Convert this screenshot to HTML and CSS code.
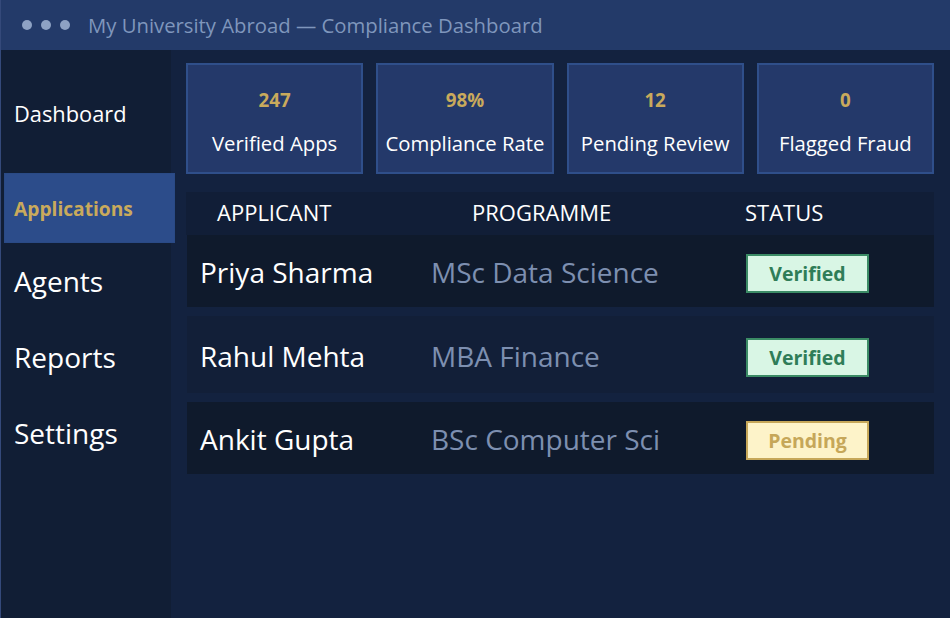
FILE: index.html
```html
<!DOCTYPE html>
<html>
<head>
  <meta charset="UTF-8">
  <meta name="viewport" content="width=device-width, initial-scale=1.0">
  <title>My University Abroad — Compliance Dashboard</title>
  <link rel="stylesheet" href="styles.css">
</head>
<body>
  <div class="window">
    <div class="titlebar">
      <span class="dot"></span><span class="dot"></span><span class="dot"></span>
      <span class="title">My University Abroad — Compliance Dashboard</span>
    </div>
    <div class="layout">
      <nav class="sidebar">
        <a class="nav-item small">Dashboard</a>
        <a class="nav-item active">Applications</a>
        <a class="nav-item">Agents</a>
        <a class="nav-item">Reports</a>
        <a class="nav-item">Settings</a>
      </nav>
      <main class="main">
        <div class="stats">
          <div class="stat-card"><div class="stat-value">247</div><div class="stat-label">Verified Apps</div></div>
          <div class="stat-card"><div class="stat-value">98%</div><div class="stat-label">Compliance Rate</div></div>
          <div class="stat-card"><div class="stat-value">12</div><div class="stat-label">Pending Review</div></div>
          <div class="stat-card"><div class="stat-value">0</div><div class="stat-label">Flagged Fraud</div></div>
        </div>
        <div class="table">
          <div class="table-head">
            <span>APPLICANT</span><span>PROGRAMME</span><span>STATUS</span>
          </div>
          <div class="table-row">
            <span class="name">Priya Sharma</span>
            <span class="programme">MSc Data Science</span>
            <span><span class="badge verified">Verified</span></span>
          </div>
          <div class="table-row alt">
            <span class="name">Rahul Mehta</span>
            <span class="programme">MBA Finance</span>
            <span><span class="badge verified">Verified</span></span>
          </div>
          <div class="table-row">
            <span class="name">Ankit Gupta</span>
            <span class="programme">BSc Computer Sci</span>
            <span><span class="badge pending">Pending</span></span>
          </div>
        </div>
      </main>
    </div>
  </div>
</body>
</html>
```

FILE: styles.css
```css
:root {
  --titlebar-bg: #233a69; --sidebar-bg: #111e35; --main-bg: #13223f;
  --card-bg: #24396a; --card-border: #2f4f8a; --gold: #c9aa5c;
  --row-bg: #0f1a2c; --row-alt: #121f38; --muted: #7d8fb0;
}
html { box-sizing: border-box; }
*, *:before, *:after { box-sizing: inherit; }
body {
  margin: 0; background: var(--main-bg); color: #ffffff;
  font-family: 'Open Sans', 'Noto Sans', Arial, sans-serif;
}
.window { width: 950px; height: 618px; display: flex; flex-direction: column; border-left: 1px solid #34497a; }
.titlebar {
  height: 50px; background: var(--titlebar-bg); display: flex; align-items: center;
  padding-left: 21px; flex-shrink: 0;
}
.dot { width: 10px; height: 10px; border-radius: 50%; background: #8ea2c4; margin-right: 9px; }
.title { margin-left: 9px; font-size: 20.3px; color: #7f96bc; }
.layout { flex: 1; display: flex; }
.sidebar { width: 170px; background: var(--sidebar-bg); display: flex; flex-direction: column; padding: 3px 0 0 3px; }
.nav-item {
  display: flex; align-items: center; height: 76px; padding-left: 10px;
  font-size: 28px; color: #ffffff;
}
.nav-item.small { height: 120px; font-size: 21.8px; }
.nav-item.active {
  height: 70px; margin-right: -4px; padding-left: 9px; background: #2c4c8a; border: 1px solid #2a4a85;
  color: var(--gold); font-weight: 700; font-size: 19.2px;
}
.main { flex: 1; padding: 13px 16px 0 15px; }
.stats { display: grid; grid-template-columns: repeat(4, 1fr); gap: 13px; }
.stat-card {
  height: 111px; background: var(--card-bg); border: 2px solid var(--card-border);
  display: flex; flex-direction: column; align-items: center; padding-top: 22px;
}
.stat-value { color: var(--gold); font-weight: 700; font-size: 18.8px; }
.stat-label { font-size: 20.3px; margin-top: 16px; }
.table { margin-top: 18px; display: flex; flex-direction: column; }
.table-head {
  height: 43px; background: #111e37; display: grid; grid-template-columns: 255px 273px auto;
  align-items: center; padding: 0 0 4px 31px; font-size: 22px;
}
.table-row {
  height: 72px; background: var(--row-bg); display: grid; grid-template-columns: 231px 315px auto;
  align-items: center; padding: 2px 0 0 13px; margin-left: 1px; margin-bottom: 9px; font-size: 28px;
}
.table-row.alt { background: var(--row-alt); height: 77px; }
.programme { color: var(--muted); }
.badge {
  display: inline-flex; align-items: center; justify-content: center; width: 123px; height: 39px;
  border: 2px solid; font-size: 19.5px; font-weight: 700;
}
.badge.verified { background: #d9f6e5; border-color: #3b8b65; color: #2f7d58; }
.badge.pending { background: #fdf3c9; border-color: #c6a759; color: #c6a759; }
```
